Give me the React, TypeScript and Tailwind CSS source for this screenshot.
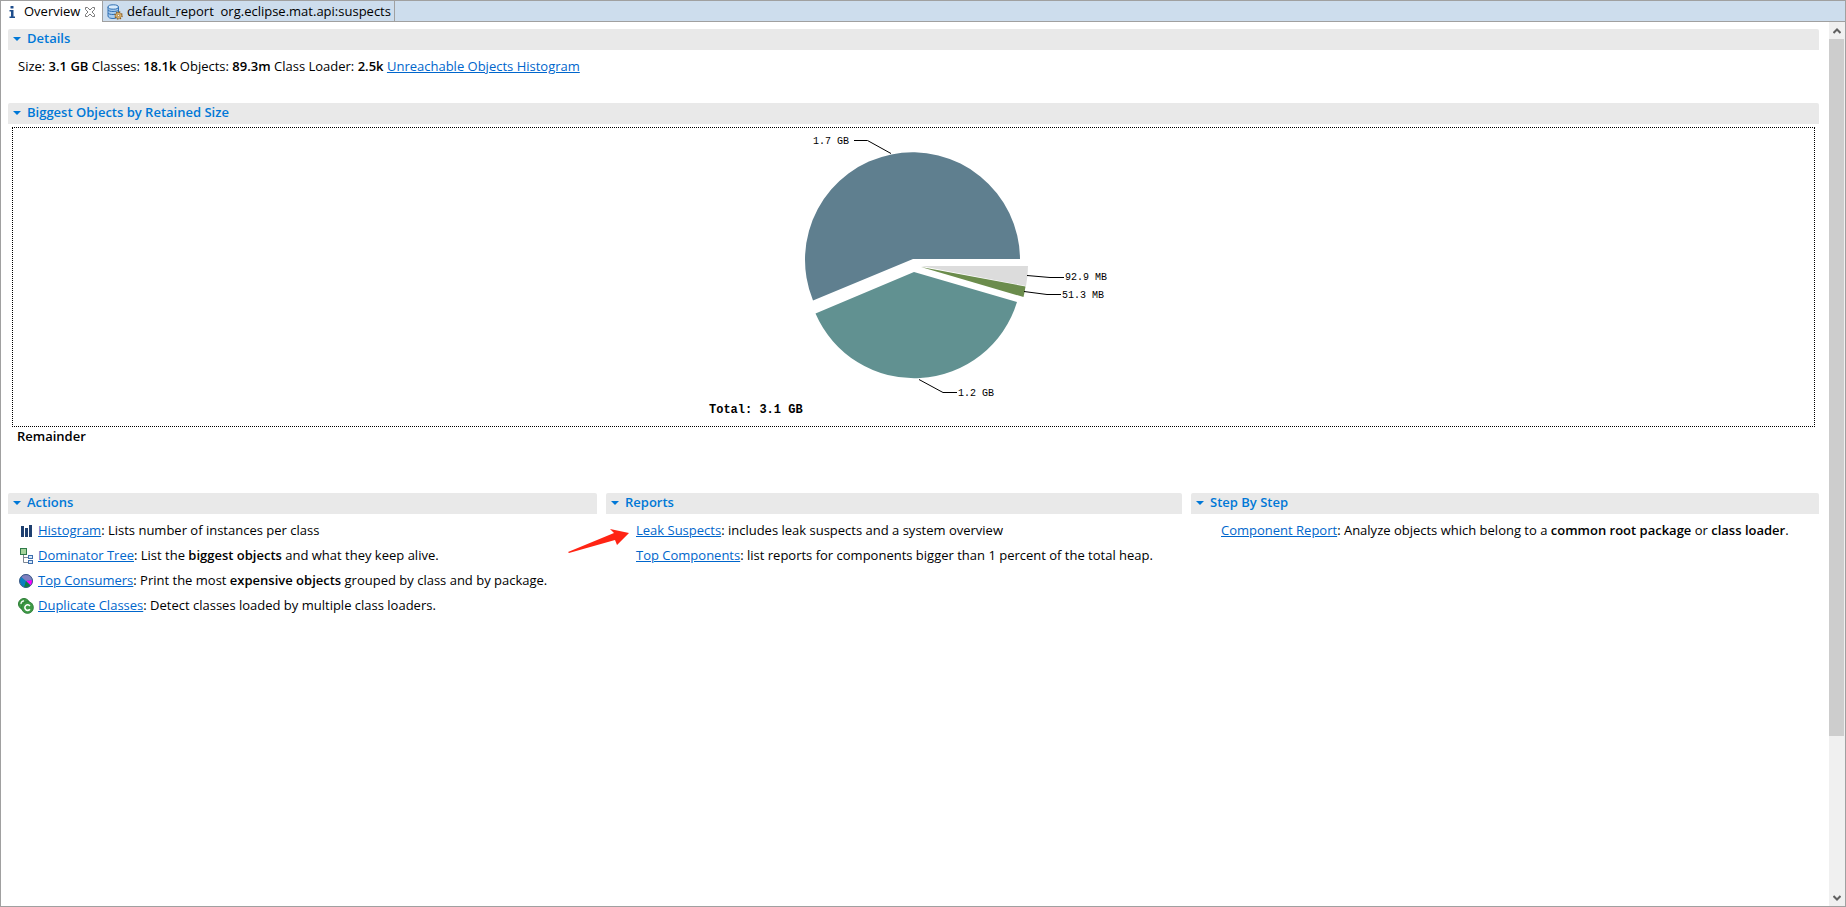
import React from 'react'

interface SectionProps {
  title: string
  className?: string
  children: React.ReactNode
}

interface TaskProps {
  icon?: React.ReactNode
  link: string
  children: React.ReactNode
}

function InfoIcon() {
  return (
    <svg width="16" height="16" viewBox="0 0 16 16" aria-hidden="true" fill="#1f4e8c">
      <rect x="6.500" y="2" width="3" height="2.500" rx="0.500" />
      <path d="M5.500 6h4v6.500h1.500V14h-5.500v-1.500H7v-5H5.500z" />
    </svg>
  )
}

function CloseIcon() {
  return (
    <svg width="12" height="12" viewBox="0 0 12 12" aria-hidden="true" fill="none" stroke="#7a7a7a">
      <path d="M1.500 1.500h2L6 4l2.500-2.500h2v2L8 6l2.500 2.500v2h-2L6 8l-2.500 2.500h-2v-2L4 6 1.500 3.500z" />
    </svg>
  )
}

function ReportIcon() {
  return (
    <svg width="16" height="16" viewBox="0 0 16 16" aria-hidden="true">
      <path d="M1 3v9c0 1.500 2 2.500 5 2.500s5.500-1 5.500-2.500V3z" fill="#a9cdf0" stroke="#2f6fb3" />
      <ellipse cx="6.200" cy="3" rx="5.200" ry="2.200" fill="#d9ebfb" stroke="#2f6fb3" />
      <path d="M1 6c1 2 9 2 10.500 0M1 9c1 2 9 2 10.500 0" fill="none" stroke="#2f6fb3" />
      <circle cx="11.500" cy="11.500" r="3.500" fill="none" stroke="#8a5a1c" strokeWidth="1.500" strokeDasharray="1.400 1.350" />
      <circle cx="11.500" cy="11.500" r="2.800" fill="#f6d589" stroke="#9a6a2c" strokeWidth="0.800" />
      <circle cx="11.500" cy="11.500" r="1.200" fill="#fff" stroke="#8a5a1c" strokeWidth="0.800" />
    </svg>
  )
}

function HistogramIcon() {
  return (
    <svg width="16" height="16" viewBox="0 0 16 16" aria-hidden="true" fill="#1e3f6f">
      <path d="M3 3h3v11H3zM7 5h3v9H7zM11 2h3v12h-3z" />
    </svg>
  )
}

function TreeIcon() {
  return (
    <svg width="16" height="16" viewBox="0 0 16 16" aria-hidden="true" fill="none">
      <path d="M5.500 7v7.500H10M5.500 9.500H10" stroke="#7d8794" />
      <rect x="2.500" y="0.500" width="6" height="6" fill="#a5d39b" stroke="#2f7a4a" />
      <rect x="10.500" y="7.500" width="4" height="3" fill="#d5e8fa" stroke="#3f6fae" />
      <rect x="10.500" y="12.500" width="4" height="3" fill="#d5e8fa" stroke="#3f6fae" />
    </svg>
  )
}

function PieIcon() {
  return (
    <svg width="16" height="16" viewBox="0 0 16 16" aria-hidden="true">
      <circle cx="8" cy="8" r="6.500" fill="#0a7fc0" />
      <path d="M8 8L3 3.800A6.500 6.500 0 0 1 14.500 7z" fill="#8080c0" />
      <path d="M8 8l6.500-1A6.500 6.500 0 0 1 12.500 12.600z" fill="#ff00ff" />
      <path d="M8 8l4.500 4.600A6.500 6.500 0 0 1 6 14.200z" fill="#0a8048" />
      <circle cx="8" cy="8" r="6.500" fill="none" stroke="#3c5a86" />
    </svg>
  )
}

function ClassesIcon() {
  return (
    <svg width="16" height="16" viewBox="0 0 16 16" aria-hidden="true" fill="none">
      <circle cx="6" cy="6" r="5.500" fill="#3f9a46" stroke="#2b7a35" />
      <path d="M6 2.800a3 3 0 0 0-3 3.200" stroke="#fff" strokeWidth="1.200" />
      <circle cx="9.500" cy="9.500" r="5.900" fill="#3f9a46" stroke="#2b7a35" strokeWidth="0.800" />
      <path d="M11.900 7.900a2.800 2.800 0 1 0 0 3.400" stroke="#fff" strokeWidth="1.600" />
    </svg>
  )
}

function Section({ title, className = '', children }: SectionProps) {
  return (
    <section className={className}>
      <h2 className="rounded-t-xs bg-[#e9e9e9]">
        <button className="flex h-[21px] w-full items-center gap-1.5 pb-0.5 pl-[5px] text-[13px] font-semibold text-[#0078d7]">
          <svg width="8" height="4" viewBox="0 0 8 4" aria-hidden="true" fill="#0078d7">
            <path d="M0 0h8L4 4z" />
          </svg>
          {title}
        </button>
      </h2>
      {children}
    </section>
  )
}

function Task({ icon, link, children }: TaskProps) {
  return (
    <li className="flex h-[25px] items-center">
      <span className="mr-1 w-4">{icon}</span>
      <p>
        <a href="#" className="text-[#0066cc] underline">{link}</a>
        {children}
      </p>
    </li>
  )
}

function Strong({ children }: { children: React.ReactNode }) {
  return <strong className="font-semibold">{children}</strong>
}

function RetainedSizeChart() {
  return (
    <svg width="462" height="298" viewBox="0 0 462 298" role="img" aria-label="Biggest objects by retained size">
      <path d="M230 131L130 172.500A107.500 107.500 0 1 1 337 131z" fill="#5f7f8f" />
      <path d="M231 144L334 174A107.500 107.500 0 0 1 132.500 185.500z" fill="#619191" />
      <path d="M238 138h107a107 107 0 0 1-2 20z" fill="#dcdcdc" />
      <path d="M238 139l104.500 19.500a107 107 0 0 1-2 10.500z" fill="#6b8c4c" />
      <g fill="none" stroke="#000">
        <path d="M171 12.500h13.500L208 25.500" />
        <path d="M344 147.500l23 2h14" />
        <path d="M341 163.500l23 3h14" />
        <path d="M236 251.500l24 13h14" />
      </g>
      <g className="font-['Liberation_Mono',monospace] text-[10px]">
        <text x="130" y="16">1.7 GB</text>
        <text x="382" y="152">92.9 MB</text>
        <text x="379" y="170">51.3 MB</text>
        <text x="275" y="268">1.2 GB</text>
      </g>
      <text x="26" y="285" className="font-['Liberation_Mono',monospace] text-[12px] font-bold">
        Total: 3.1 GB
      </text>
    </svg>
  )
}

export default function App() {
  return (
    <div className="flex h-screen flex-col border border-[#a0a0a0] bg-white font-['Open_Sans','Noto_Sans',sans-serif] text-[13px] text-black">
      <div role="tablist" className="flex h-[21px] shrink-0 bg-[#cddded]">
        <div className="flex w-[102px] items-center border-r border-[#a0a0a0] bg-white pl-[3px]">
          <button role="tab" aria-selected="true" className="flex items-center gap-1">
            <InfoIcon />
            Overview
          </button>
          <button aria-label="Close" className="ml-1">
            <CloseIcon />
          </button>
        </div>
        <div className="flex grow border-b border-[#a0a0a0]">
          <button role="tab" aria-selected="false" className="flex items-center gap-1 border-r border-[#a0a0a0] pt-px pr-[3px] pl-1 whitespace-pre">
            <ReportIcon />
            {'default_report  org.eclipse.mat.api:suspects'}
          </button>
        </div>
      </div>

      <div className="flex min-h-0 grow">
        <main className="min-w-0 grow pt-[7px] pr-[10px] pl-[7px]">
          <Section title="Details">
            <p className="px-[10px] pt-[7px] pb-[27px] leading-[19px]">
              Size: <Strong>3.1 GB</Strong> Classes: <Strong>18.1k</Strong> Objects: <Strong>89.3m</Strong> Class Loader:{' '}
              <Strong>2.5k</Strong>{' '}
              <a href="#" className="text-[#0066cc] underline">Unreachable Objects Histogram</a>
            </p>
          </Section>

          <Section title="Biggest Objects by Retained Size">
            <div className="mx-1 mt-[3px] flex justify-center border border-dotted border-black">
              <RetainedSizeChart />
            </div>
            <p className="px-[9px] leading-[19px] font-semibold">Remainder</p>
          </Section>

          <div className="mt-[47px] grid grid-cols-[589fr_576fr_628fr] gap-[9px]">
            <Section title="Actions">
              <ul className="mt-1 pl-[10px]">
                <Task icon={<HistogramIcon />} link="Histogram">: Lists number of instances per class</Task>
                <Task icon={<TreeIcon />} link="Dominator Tree">
                  : List the <Strong>biggest objects</Strong> and what they keep alive.
                </Task>
                <Task icon={<PieIcon />} link="Top Consumers">
                  : Print the most <Strong>expensive objects</Strong> grouped by class and by package.
                </Task>
                <Task icon={<ClassesIcon />} link="Duplicate Classes">: Detect classes loaded by multiple class loaders.</Task>
              </ul>
            </Section>

            <Section title="Reports" className="relative">
              <ul className="mt-1 pl-[10px]">
                <Task link="Leak Suspects">: includes leak suspects and a system overview</Task>
                <Task link="Top Components">: list reports for components bigger than 1 percent of the total heap.</Task>
              </ul>
              <svg className="absolute top-[35px] -left-[38px]" width="62" height="26" viewBox="0 0 62 26" aria-hidden="true">
                <path d="M0 24L46 5 42 1 61 5 49 17 47 12 1 25z" fill="#ff2414" />
              </svg>
            </Section>

            <Section title="Step By Step">
              <ul className="mt-1 pl-[10px]">
                <Task link="Component Report">
                  : Analyze objects which belong to a <Strong>common root package</Strong> or <Strong>class loader</Strong>.
                </Task>
              </ul>
            </Section>
          </div>
        </main>

        <div className="flex w-4 shrink-0 flex-col bg-[#f0f0f0]">
          <button aria-label="Scroll up" className="flex h-[17px] items-center justify-center">
            <svg width="8" height="6" viewBox="0 0 8 6" aria-hidden="true" fill="none" stroke="#606060" strokeWidth="2">
              <path d="M0.500 5L4 1.500 7.500 5" />
            </svg>
          </button>
          <div className="grow">
            <div className="mr-px h-[82%] bg-[#cdcdcd]" />
          </div>
          <button aria-label="Scroll down" className="flex h-[17px] items-center justify-center">
            <svg width="8" height="6" viewBox="0 0 8 6" aria-hidden="true" fill="none" stroke="#606060" strokeWidth="2">
              <path d="M0.500 1L4 4.500 7.500 1" />
            </svg>
          </button>
        </div>
      </div>
    </div>
  )
}
